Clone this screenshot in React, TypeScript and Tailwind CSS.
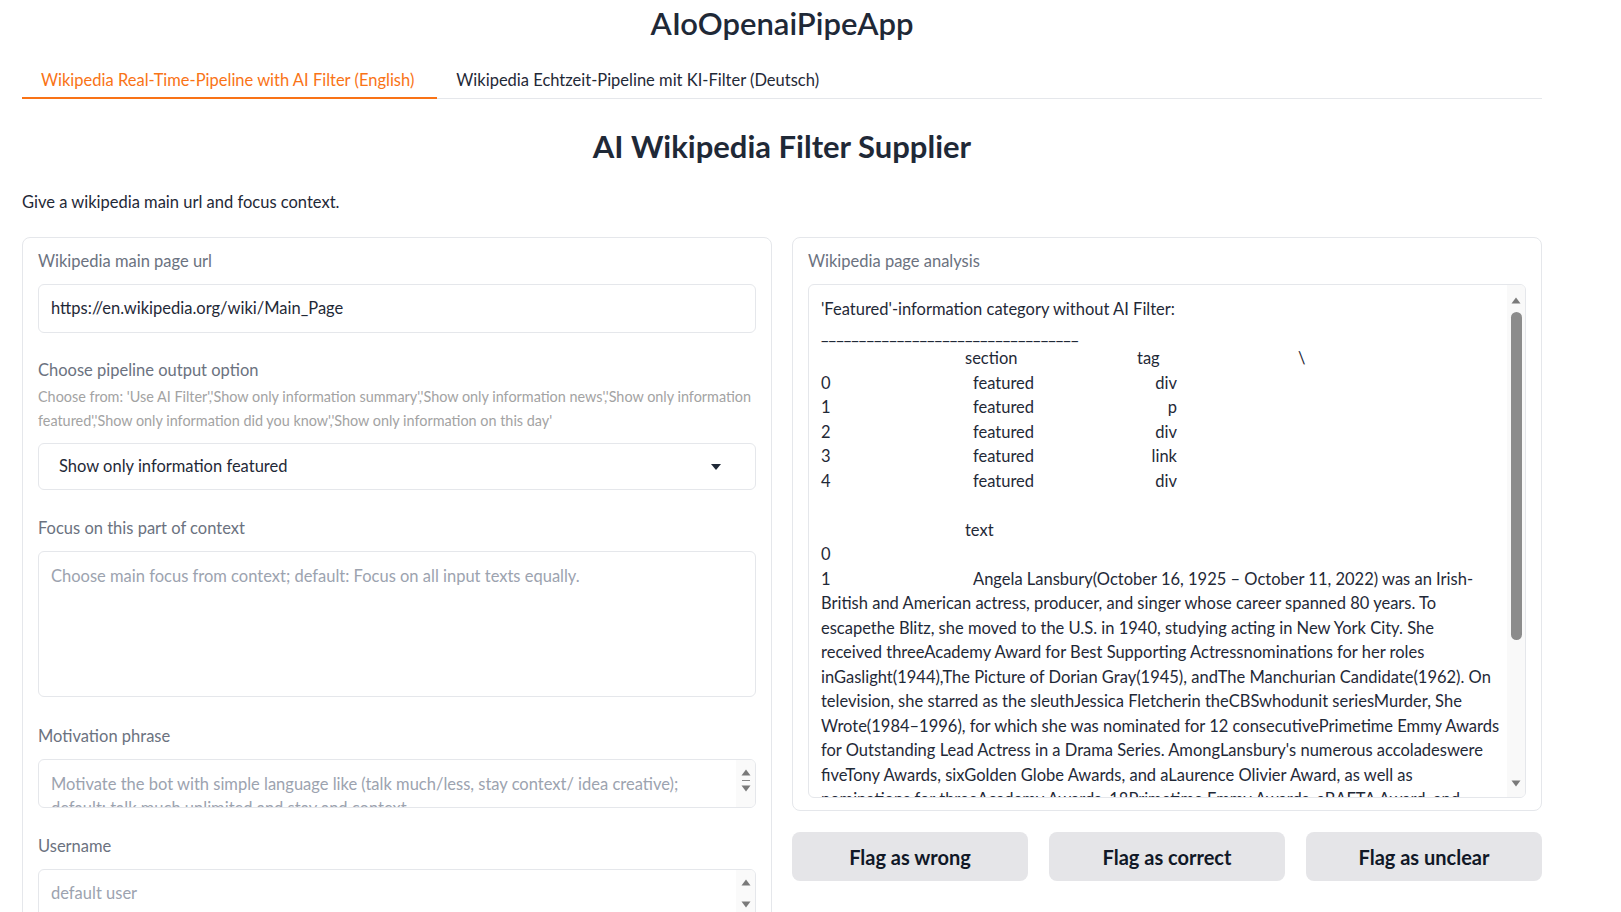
import React from 'react';

const Up = () => (
  <svg width="10" height="7" viewBox="0 0 10 7" className="block">
    <path d="M5 0.5 L9.5 6.5 H0.5 Z" fill="#7a7a7a" />
  </svg>
);
const Down = () => (
  <svg width="10" height="7" viewBox="0 0 10 7" className="block">
    <path d="M0.5 0.5 H9.5 L5 6.5 Z" fill="#7a7a7a" />
  </svg>
);

const Label = ({ children }: { children: React.ReactNode }) => (
  <div className="text-[16.5px] leading-[24px] text-[#6b7280]">{children}</div>
);

const paragraph = [
  'British and American actress, producer, and singer whose career spanned 80 years. To',
  'escapethe Blitz, she moved to the U.S. in 1940, studying acting in New York City. She',
  'received threeAcademy Award for Best Supporting Actressnominations for her roles',
  'inGaslight(1944),The Picture of Dorian Gray(1945), andThe Manchurian Candidate(1962). On',
  'television, she starred as the sleuthJessica Fletcherin theCBSwhodunit seriesMurder, She',
  'Wrote(1984–1996), for which she was nominated for 12 consecutivePrimetime Emmy Awards',
  "for Outstanding Lead Actress in a Drama Series. AmongLansbury's numerous accoladeswere",
  'fiveTony Awards, sixGolden Globe Awards, and aLaurence Olivier Award, as well as',
  'nominations for threeAcademy Awards, 18Primetime Emmy Awards, aBAFTA Award, and',
];

const rows = [
  ['0', 'div'],
  ['1', 'p'],
  ['2', 'div'],
  ['3', 'link'],
  ['4', 'div'],
];

function Analysis() {
  return (
    <div className="text-[16.5px] leading-[24.5px] text-[#1f2937] whitespace-nowrap">
      <div>'Featured'-information category without AI Filter:</div>
      <div>__________________________________</div>
      <div className="flex">
        <span className="w-[144px]" />
        <span className="w-[172px]">section</span>
        <span className="w-[161px]">tag</span>
        <span>\</span>
      </div>
      {rows.map(([i, tag]) => (
        <div key={i} className="flex">
          <span className="w-[152px]">{i}</span>
          <span className="w-[160px]">featured</span>
          <span className="w-[44px] text-right">{tag}</span>
        </div>
      ))}
      <div className="h-[24.5px]" />
      <div className="flex">
        <span className="w-[144px]" />
        <span>text</span>
      </div>
      <div>0</div>
      <div className="flex">
        <span className="w-[152px]">1</span>
        <span>Angela Lansbury(October 16, 1925 – October 11, 2022) was an Irish-</span>
      </div>
      {paragraph.map((l) => (
        <div key={l}>{l}</div>
      ))}
    </div>
  );
}

export default function App() {
  return (
    <div className="min-h-screen bg-white font-['Lato',sans-serif] text-[#1f2937]">
      <div className="w-[1520px] ml-[22px]">
        {/* title */}
        <h1 className="mt-[5px] text-center text-[31px] leading-[36px] font-semibold text-[#1f2937]">
          AIoOpenaiPipeApp
        </h1>

        {/* tabs */}
        <div className="mt-[20px] flex border-b border-[#e5e7eb] h-[38px]">
          <div className="pl-[19px] pr-[23px] pt-[2px] flex items-center text-[16.5px] text-[#f97316] border-b-2 border-[#f97316] -mb-px">
            Wikipedia Real-Time-Pipeline with AI Filter (English)
          </div>
          <div className="px-[19px] pt-[2px] flex items-center text-[16.5px] text-[#1f2937]">
            Wikipedia Echtzeit-Pipeline mit KI-Filter (Deutsch)
          </div>
        </div>

        <h2 className="mt-[29px] text-center text-[31px] leading-[36px] font-bold">
          AI Wikipedia Filter Supplier
        </h2>
        <p className="mt-[26px] text-[16.5px] leading-[24px]">Give a wikipedia main url and focus context.</p>

        <div className="mt-[23px] grid grid-cols-2 gap-[20px] items-start">
          {/* left panel */}
          <div className="border border-[#e5e7eb] rounded-[8px] px-[15px] pt-[11px] pb-[20px]">
            <Label>Wikipedia main page url</Label>
            <div className="mt-[11px] h-[49px] border border-[#e5e7eb] rounded-[6px] px-[12px] flex items-center text-[16.5px] text-[#1f2937]">
              https://en.wikipedia.org/wiki/Main_Page
            </div>

            <div className="mt-[25px]">
              <Label>Choose pipeline output option</Label>
            </div>
            <div className="mt-[3px] text-[14.4px] leading-[24px] text-[#a3a3a3]">
              Choose from: 'Use AI Filter','Show only information summary','Show only information news','Show only
              information featured','Show only information did you know','Show only information on this day'
            </div>
            <div className="mt-[10px] h-[47px] border border-[#e5e7eb] rounded-[6px] pl-[20px] pr-[34px] flex items-center justify-between text-[16.5px] text-[#1f2937]">
              <span>Show only information featured</span>
              <svg width="10" height="6" viewBox="0 0 10 6">
                <path d="M0 0 H10 L5 6 Z" fill="#1f2937" />
              </svg>
            </div>

            <div className="mt-[26px]">
              <Label>Focus on this part of context</Label>
            </div>
            <div className="mt-[11px] h-[146px] border border-[#e5e7eb] rounded-[6px] px-[12px] pt-[12px] text-[16.5px] leading-[24px] text-[#9ca3af]">
              Choose main focus from context; default: Focus on all input texts equally.
            </div>

            <div className="mt-[27px]">
              <Label>Motivation phrase</Label>
            </div>
            <div className="mt-[11px] h-[49px] border border-[#e5e7eb] rounded-[6px] flex overflow-hidden">
              <div className="flex-1 px-[12px] pt-[12px] text-[16.5px] leading-[24px] text-[#9ca3af]">
                <div>Motivate the bot with simple language like (talk much/less, stay context/ idea creative);</div>
                <div>default: talk much unlimited and stay and context</div>
              </div>
              <div className="w-[19px] bg-[#fafafa] flex flex-col items-center pt-[9px]">
                <Up />
                <div className="mt-[4px] w-[8px] h-px bg-[#8a8a8a]" />
                <div className="mt-[4px]">
                  <Down />
                </div>
              </div>
            </div>

            <div className="mt-[26px]">
              <Label>Username</Label>
            </div>
            <div className="mt-[11px] h-[49px] border border-[#e5e7eb] rounded-[6px] flex overflow-hidden">
              <div className="flex-1 px-[12px] flex items-center text-[16.5px] text-[#9ca3af]">default user</div>
              <div className="w-[19px] bg-[#fafafa] flex flex-col items-center justify-between py-[9px]">
                <Up />
                <Down />
              </div>
            </div>
          </div>

          {/* right column */}
          <div>
            <div className="border border-[#e5e7eb] rounded-[8px] px-[15px] pt-[11px] pb-[12px]">
              <Label>Wikipedia page analysis</Label>
              <div className="mt-[11px] h-[514px] border border-[#e5e7eb] rounded-[6px] flex overflow-hidden">
                <div className="flex-1 pl-[12px] pt-[12px] overflow-hidden">
                  <Analysis />
                </div>
                <div className="w-[18px] bg-[#f9f9f9] flex flex-col items-center pt-[12px] pb-[10px]">
                  <Up />
                  <div className="mt-[8px] w-[11px] h-[328px] rounded-full bg-[#8c8c8c]" />
                  <div className="mt-auto">
                    <Down />
                  </div>
                </div>
              </div>
            </div>

            <div className="mt-[21px] grid grid-cols-3 gap-[21px]">
              {['Flag as wrong', 'Flag as correct', 'Flag as unclear'].map((t) => (
                <button
                  key={t}
                  className="h-[49px] rounded-[8px] bg-[#e5e5e8] text-[20px] font-bold text-[#111827]"
                >
                  {t}
                </button>
              ))}
            </div>
          </div>
        </div>
      </div>
    </div>
  );
}
